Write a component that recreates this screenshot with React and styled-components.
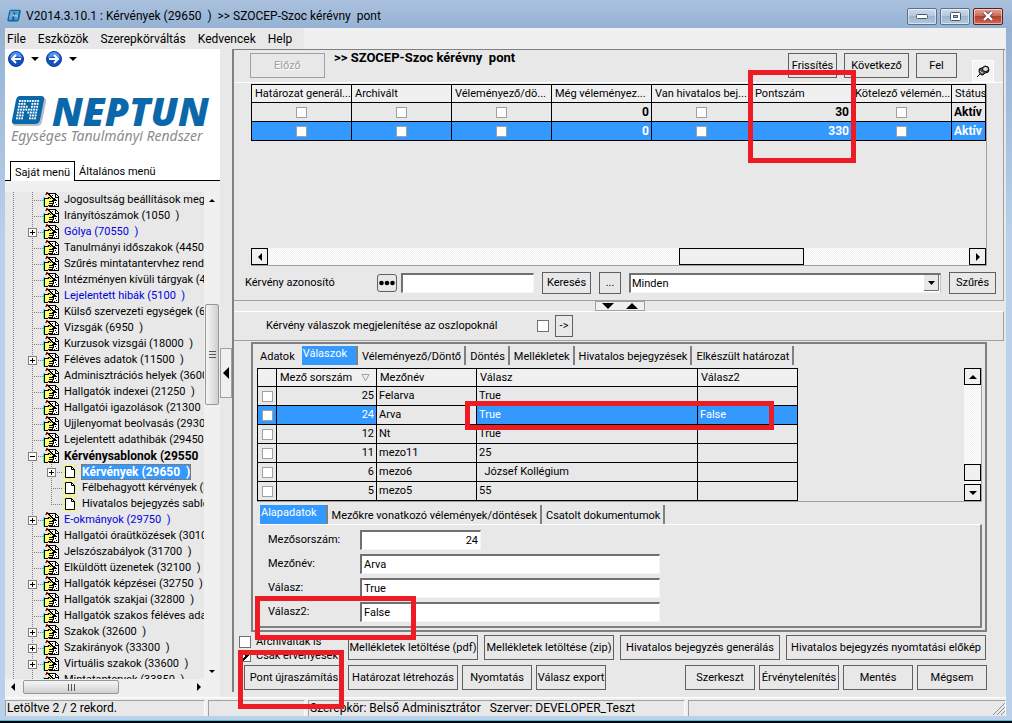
import React from 'react';
import styled, { createGlobalStyle, css } from 'styled-components';

const GlobalStyle = createGlobalStyle`
  * {
    box-sizing: border-box;
  }
  body {
    margin: 0;
    background: #e8e8e8;
    color: #000;
    font-family: Roboto, 'Liberation Sans', sans-serif;
    font-size: 11px;
    line-height: 16px;
  }
  button,
  input,
  select {
    font: inherit;
    color: inherit;
    margin: 0;
  }
  svg {
    flex: none;
  }
`;

const Window = styled.div`
  position: relative;
  display: flex;
  flex-direction: column;
  height: 100vh;
  min-height: 640px;
  padding: 0 6px 5px 5px;
  border-bottom: 2px solid #000;
  background: linear-gradient(#a9c1dd, #95b2d4 28px, #b9d1ea 240px);
  box-shadow: inset 0 -1px 0 #35c5e8;
  overflow: hidden;
`;

const TitleBar = styled.header`
  display: flex;
  align-items: center;
  flex: none;
  gap: 4px;
  height: 28px;
  padding: 4px 3px 0 2px;
  white-space: pre;
`;

const Caption = styled.h1`
  flex: 1;
  margin: 0;
  font-size: 12px;
  font-weight: 400;
`;

const WindowButtons = styled.div`
  display: flex;
  gap: 3px;
`;

const WindowButton = styled.button`
  display: flex;
  align-items: center;
  justify-content: center;
  width: 30px;
  height: 17px;
  padding: 0;
  border: 1px solid ${props => (props.$close ? '#5b1f1a' : '#5c6f86')};
  border-radius: 2px;
  background: ${props =>
    props.$close
      ? 'linear-gradient(#e3a194, #cf6a58 45%, #b8402b 50%, #cf6a52)'
      : 'linear-gradient(#cddcec, #b5c9df 45%, #9db5cf 50%, #b3c8df)'};
  box-shadow: inset 0 0 0 1px rgba(255, 255, 255, 0.5);
`;

const MenuBar = styled.nav`
  display: flex;
  flex: none;
  height: 21px;
  background: #f0f0f0;
  font-size: 12px;
`;

const MenuItems = styled.div`
  display: flex;
  align-items: center;
  gap: 12px;
  padding: 0 12px 0 2px;
  background: #e8e8e8;
`;

const MenuItem = styled.button`
  padding: 0;
  border: 0;
  background: none;
`;

const Body = styled.div`
  display: flex;
  flex: 1;
  min-height: 0;
  background: #e8e8e8;
`;

const Sidebar = styled.aside`
  display: flex;
  flex-direction: column;
  flex: none;
  width: 215px;
  background: #f0f0f0;
`;

const Brand = styled.div`
  display: flex;
  flex-direction: column;
  height: 112px;
  background: #fff;
`;

const NavRow = styled.div`
  display: flex;
  align-items: center;
  gap: 7px;
  height: 20px;
  padding-left: 3px;
`;

const IconButton = styled.button`
  display: flex;
  padding: 0;
  border: 0;
  background: none;
`;

const Logo = styled.div`
  display: flex;
  align-items: center;
  gap: 5px;
  height: 32px;
  margin-top: 26px;
  padding-left: 6px;
  color: #0a68aa;
  font-family: 'Open Sans', sans-serif;
  font-size: 39px;
  font-style: italic;
  font-weight: 800;
  line-height: 32px;
`;

const Slogan = styled.div`
  padding-left: 6px;
  color: #8c8c8c;
  font-family: 'Noto Sans', sans-serif;
  font-size: 14px;
  font-style: italic;
  line-height: 18px;
  white-space: nowrap;
`;

const SideTabs = styled.div`
  display: flex;
  height: 20px;
  padding-left: 5px;
  border-bottom: 1px solid #000;
  background: #fff;
`;

const SideTab = styled.button`
  height: ${props => (props.$active ? 20 : 19)}px;
  padding: 2px 4px 0;
  border: 0 solid #000;
  background: #fff;
  white-space: nowrap;
  ${props =>
    props.$active &&
    css`
      border-width: 1px 1px 0;
    `}
`;

const TreeArea = styled.div`
  display: flex;
  flex: 1;
  min-height: 0;
  margin-top: 11px;
  background: #e8e8e8;
`;

const Tree = styled.ul`
  flex: 1;
  min-width: 0;
  margin: 0;
  padding: 0;
  overflow: hidden;
  list-style: none;
`;

const dottedColumn = css`
  background: repeating-linear-gradient(#808080 0 1px, transparent 1px 2px) 8px
    0 / 1px 100% no-repeat;
`;

const TreeRow = styled.li`
  display: flex;
  align-items: center;
  height: 16px;
  white-space: pre;
`;

const Gutter = styled.span`
  flex: none;
  width: 19px;
  height: 16px;
  ${dottedColumn}
`;

const Branch = styled.span`
  display: flex;
  align-items: center;
  flex: none;
  width: 19px;
  height: 16px;
  padding-left: 4px;
  background: repeating-linear-gradient(
        #808080 0 1px,
        transparent 1px 2px
      )
      8px 0 / 1px ${props => (props.$last ? '8px' : '100%')} no-repeat,
    repeating-linear-gradient(90deg, #808080 0 1px, transparent 1px 2px) 8px 8px /
      11px 1px no-repeat;
`;

const TreeLabel = styled.span`
  margin-left: 3px;
  padding: 0 1px;
  color: ${props => (props.$link ? '#0000e0' : '#000')};
  ${props =>
    props.$bold &&
    css`
      font-size: 12px;
      font-weight: 700;
    `}
  ${props =>
    props.$selected &&
    css`
      outline: 1px dotted #c06000;
      outline-offset: -1px;
      background: #3399ff;
      color: #fff;
    `}
`;

const SideScroll = styled.div`
  display: flex;
  flex-direction: column;
  align-items: center;
  flex: none;
  width: 16px;
  padding: 7px 0 6px;
  background: #f0f0f0;
`;

const SideThumb = styled.div`
  display: flex;
  align-items: center;
  justify-content: center;
  border: 1px solid #979797;
  border-radius: 2px;
  background: ${props =>
    props.$across
      ? 'linear-gradient(#f5f5f5, #e4e4e4 50%, #cfcfcf)'
      : 'linear-gradient(90deg, #f5f5f5, #e4e4e4 50%, #cfcfcf)'};
  width: ${props => (props.$across ? '96px' : '14px')};
  height: ${props => (props.$across ? '14px' : '101px')};
`;

const Spring = styled.div`
  flex: ${props => props.$grow || 1};
`;

const SideScrollX = styled.div`
  display: flex;
  align-items: center;
  flex: none;
  height: 18px;
  padding: 0 19px 2px 6px;
  gap: 8px;
`;

const Divider = styled.div`
  display: flex;
  align-items: center;
  flex: none;
  width: 12px;
`;

const DividerGrip = styled.button`
  display: flex;
  align-items: center;
  justify-content: center;
  width: 12px;
  height: 50px;
  padding: 0;
  border: 1px solid #a0a0a0;
  background: #f0f0f0;
`;

const Main = styled.main`
  display: flex;
  flex-direction: column;
  flex: 1;
  min-width: 0;
  margin: 0 1px 5px 0;
  border: solid #808080;
  border-width: 1px 0 0 2px;
`;

const ListPane = styled.section`
  display: flex;
  flex-direction: column;
  flex: 1;
  min-height: 0;
  margin-right: 1px;
  border: solid #a0a0a0;
  border-width: 0 1px 1px 0;
`;

const Toolbar = styled.div`
  display: flex;
  flex: none;
  gap: 7px;
  height: 33px;
  padding: 3px 9px 0 16px;
  border-bottom: 1px solid #fff;
`;

const PathTitle = styled.h2`
  flex: 1;
  margin: 0;
  padding-left: 2px;
  font-size: 13px;
  font-weight: 700;
  line-height: 9px;
  white-space: pre;
`;

const Button = styled.button`
  flex: none;
  width: ${props => props.$width}px;
  height: ${props => (props.$small ? 22 : 25)}px;
  padding: 0;
  border: 1px solid #606060;
  background: #e8e8e8;
  white-space: nowrap;
  &:disabled {
    border-color: #a0a0a0;
    color: #a0a0a0;
    text-shadow: 1px 1px 0 #fff;
  }
`;

const PinButton = styled.button`
  display: flex;
  align-items: center;
  justify-content: center;
  align-self: flex-end;
  width: 22px;
  height: 22px;
  margin-left: 8px;
  padding: 0;
  border: 1px solid #fff;
  background: #f4f4f4;
`;

const ListFrame = styled.div`
  display: flex;
  flex-direction: column;
  flex: 1;
  min-height: 0;
  margin: 1px 16px 0 17px;
  border: solid #a0a0a0;
  border-width: 0 1px 1px 0;
  overflow: hidden;
`;

const DataTable = styled.table`
  width: 100%;
  border-collapse: collapse;
  table-layout: fixed;
  tr {
    height: 19px;
  }
  thead tr {
    height: 18px;
  }
  th,
  td {
    padding: 0 2px;
    border: 1px solid #000;
    line-height: 16px;
    overflow: hidden;
    text-align: left;
    white-space: pre;
  }
  th {
    padding: 0 3px;
    background: #f0f0f0;
    font-weight: 400;
  }
`;

const Cell = styled.td`
  && {
    text-align: ${props => props.$align || 'left'};
    font-size: ${props => (props.$bold ? 12 : 11)}px;
    font-weight: ${props => (props.$bold ? 700 : 400)};
  }
  ${props =>
    props.$selected &&
    css`
      background: #3399ff;
      color: #fff;
    `}
`;

const Check = styled.input.attrs({ type: 'checkbox' })`
  appearance: none;
  display: inline-block;
  flex: none;
  width: ${props => (props.$sunken ? 12 : 11)}px;
  height: ${props => (props.$sunken ? 12 : 11)}px;
  border: 1px solid ${props => (props.$sunken ? '#707070' : '#a0a0a0')};
  background: #fff;
  vertical-align: middle;
  &:checked {
    background: linear-gradient(135deg, transparent 50%, #000 50% 68%, transparent 68%);
    background-color: #fff;
  }
`;

const hatch = css`
  background: repeating-conic-gradient(#ffffff 0 25%, #f0f0f0 0 50%) 0 0 / 2px
    2px;
`;

const ScrollX = styled.div`
  display: flex;
  flex: none;
  height: 17px;
  margin-top: auto;
  ${hatch}
`;

const ScrollY = styled.div`
  display: flex;
  flex-direction: column;
  flex: none;
  width: 17px;
  margin-left: auto;
  ${hatch}
`;

const ScrollButton = styled.button`
  display: flex;
  align-items: center;
  justify-content: center;
  flex: none;
  width: 17px;
  height: 17px;
  padding: 0;
  border: 1px solid #000;
  background: #f0f0f0;
`;

const ScrollThumb = styled.div`
  width: ${props => props.$width}px;
  height: 17px;
  border: 1px solid #000;
  background: #f0f0f0;
`;

const FilterRow = styled.div`
  display: flex;
  align-items: center;
  flex: none;
  gap: 8px;
  height: 34px;
  padding: 0 7px 0 11px;
`;

const FilterLabel = styled.label`
  width: 124px;
`;

const DotsButton = styled.button`
  display: flex;
  align-items: center;
  justify-content: center;
  width: 20px;
  height: 18px;
  margin-right: -4px;
  padding: 0;
  border: 1px solid #606060;
  border-radius: 3px;
  background: #e8e8e8;
`;

const TextInput = styled.input`
  width: ${props => props.$width}px;
  height: 20px;
  padding: 0 2px;
  border: solid;
  border-width: 2px 1px 1px 2px;
  border-color: #707070 #f4f4f4 #f4f4f4 #707070;
  border-radius: 0;
  background: #fff;
  text-align: ${props => props.$align || 'left'};
`;

const SelectBox = styled.div`
  position: relative;
  display: flex;
  flex: 1;
  svg {
    position: absolute;
    top: 2px;
    right: 2px;
    pointer-events: none;
  }
`;

const Select = styled.select`
  appearance: none;
  width: 100%;
  height: 20px;
  padding: 0 20px 0 1px;
  border: solid;
  border-width: 2px 1px 1px 2px;
  border-color: #707070 #c0c0c0 #f4f4f4 #707070;
  border-radius: 0;
  background: #fff;
`;

const SplitBar = styled.div`
  display: flex;
  justify-content: center;
  flex: none;
  height: 10px;
`;

const SplitGrip = styled.button`
  display: flex;
  align-items: center;
  justify-content: space-around;
  width: 50px;
  height: 10px;
  padding: 0;
  border: 1px solid #a0a0a0;
  background: #f0f0f0;
`;

const OptionRow = styled.div`
  display: flex;
  align-items: center;
  flex: none;
  gap: 6px;
  height: 30px;
  margin-right: 1px;
  padding-left: 32px;
  border: solid;
  border-width: 1px 1px 1px 0;
  border-color: #fff #a0a0a0 #a0a0a0;
`;

const OptionLabel = styled.label`
  width: 265px;
`;

const DetailFrame = styled.section`
  flex: none;
  margin: 1px 18px 0 17px;
  padding: 2px 3px 2px 4px;
  border: 2px solid #808080;
`;

const Tabs = styled.div`
  display: flex;
  height: 22px;
  padding-left: ${props => (props.$inner ? 3 : 0)}px;
  padding-top: ${props => (props.$inner ? 3 : 0)}px;
`;

const Tab = styled.button`
  height: 19px;
  padding: ${props => (props.$active ? '0 9px 3px 1px' : '3px 3px 0 4px')};
  border: 0;
  border-right: 2px solid #808080;
  background: none;
  line-height: 16px;
  white-space: nowrap;
  ${props =>
    props.$plain &&
    css`
      border-color: transparent;
      padding-left: 3px;
      padding-right: 5px;
    `}
  ${props =>
    props.$active &&
    css`
      background: #3399ff;
      color: #fff;
    `}
`;

const AnswerFrame = styled.div`
  display: flex;
  border: solid #a0a0a0;
  border-width: 0 1px 1px 0;
  ${DataTable} {
    width: 541px;
  }
`;

const SortHeader = styled.span`
  display: flex;
  align-items: center;
  justify-content: space-between;
  padding-right: 3px;
`;

const Form = styled.form`
  display: grid;
  grid-template-columns: 92px 1fr;
  align-items: center;
  row-gap: 4px;
  padding: 5px 0 4px 11px;
  border: solid;
  border-width: 1px 2px 2px 0;
  border-color: #fff #808080 #808080;
`;

const Actions = styled.div`
  display: flex;
  flex: none;
  gap: ${props => props.$gap}px;
  height: 30px;
  padding: ${props => (props.$inset ? '3px 18px 0 10px' : '3px 18px 0 5px')};
`;

const CheckColumn = styled.div`
  flex: none;
  width: 103px;
  height: 28px;
  overflow: hidden;
`;

const CheckLabel = styled.label`
  display: flex;
  align-items: center;
  gap: 5px;
  height: 14px;
  white-space: nowrap;
`;

const StatusBar = styled.footer`
  display: flex;
  flex: none;
  gap: 3px;
  height: 19px;
  padding-top: 2px;
  border-top: 1px solid #fff;
  background: #f0f0f0;
  font-size: 12px;
`;

const StatusCell = styled.div`
  flex: ${props => (props.$width ? 'none' : 1)};
  width: ${props => (props.$width ? `${props.$width}px` : 'auto')};
  padding-left: 1px;
  border: solid;
  border-width: 1px 1px 0;
  border-color: #a0a0a0 #fff #fff #a0a0a0;
  background: #e8e8e8;
  line-height: 15px;
  overflow: hidden;
  text-align: ${props => props.$align || 'left'};
  white-space: pre;
`;

// red callout drawn over the window
const Callout = styled.div`
  position: absolute;
  left: ${props => props.$x}px;
  top: ${props => props.$y}px;
  width: ${props => props.$w}px;
  height: ${props => props.$h}px;
  border: 5px solid #ed1c24;
  pointer-events: none;
`;

const arrows = {
  up: 'M0 4L4 0L8 4Z',
  down: 'M0 0H8L4 4Z',
  left: 'M4 0V8L0 4Z',
  right: 'M0 0L4 4L0 8Z',
};

function Arrow({ dir, size = 8, color = '#000' }) {
  const flat = dir === 'up' || dir === 'down';
  return (
    <svg
      width={flat ? size : size / 2}
      height={flat ? size / 2 : size}
      viewBox={flat ? '0 0 8 4' : '0 0 4 8'}
    >
      <path d={arrows[dir]} fill={color} />
    </svg>
  );
}

function NeptunMark({ size, rounded }) {
  const dots = [];
  for (let y = 0; y < 7; y += 1) {
    for (let x = 0; x < 8; x += 1) {
      if (x < 3 || x > 4 || x - 1 === y || x === y || y < 1) {
        dots.push(
          <rect
            key={`${x}-${y}`}
            x={8 + x * 2.6 - y * 0.5}
            y={5 + y * 2.9}
            width="1.8"
            height="1.9"
            fill="#fff"
          />
        );
      }
    }
  }
  return (
    <svg width={size} height={Math.round(size * 0.9)} viewBox="0 0 36 32">
      {rounded && (
        <path
          d="M10 3h22q4 0 3 4l-4 20q-1 4-5 4H5q-4 0-3-4l4-20q1-4 4-4z"
          fill="#b9bec4"
        />
      )}
      <path
        d="M9 1h21q4 0 3 4l-4 20q-1 4-5 4H4q-4 0-3-4L5 5q1-4 4-4z"
        fill="#0a68aa"
      />
      {dots}
    </svg>
  );
}

function RoundArrow({ back }) {
  return (
    <svg width="16" height="16" viewBox="0 0 16 16">
      <circle cx="8" cy="8" r="7.5" fill="#1350bd" stroke="#0b3d99" />
      <path d="M2 7a6 6 0 0 1 12 0Q8 4 2 7z" fill="#4f94ee" />
      <path
        d={back ? 'M13 8H4M8 4L4 8L8 12' : 'M3 8H12M8 4L12 8L8 12'}
        fill="none"
        stroke="#fff"
        strokeWidth="2"
      />
    </svg>
  );
}

function FormIcon() {
  return (
    <svg width="17" height="16" viewBox="0 0 17 16" shapeRendering="crispEdges">
      <path d="M6.500 1.500h6l3 3v10h-9z" fill="#fff" stroke="#000" />
      <path d="M12.500 1v4h3" fill="none" stroke="#000" />
      <path
        d="M11 6.500h1M13 8.500h1M12 10.500h1M13 12.500h1M11 13.500h1M9 3.500h1"
        stroke="#000"
      />
      <path d="M0 5h2v9H0z" fill="#40e8e8" />
      <path
        d="M1.500 6.500h3l2-1 2 1 4 1v1h-3v1h1v2h-1v2h-3l-3 1h-2z"
        fill="#ffff66"
        stroke="#000"
      />
      <path d="M4 1l6 6" stroke="#000" strokeWidth="2" />
      <path d="M4 2l5 5" stroke="#ffe94d" />
      <path d="M3 .5h2M2 2.500h2" stroke="#e02020" />
      <path d="M6 9.500h3M6 11.500h3" stroke="#000" />
    </svg>
  );
}

function PageIcon() {
  return (
    <svg width="16" height="16" viewBox="0 0 16 16">
      <path
        d="M1 1l3 3M14 1l-2 3M1 14l2-2M15 15l-2-2M0 8h3M15 9h-2M8 0v2M8 16v-2"
        stroke="#f4f000"
      />
      <path d="M2 1h8l4 4v10H2z" fill="none" stroke="#f8f58c" />
      <path d="M3.5 2.5h6l3 3v8h-9z" fill="#fff" stroke="#000" />
      <path d="M9.5 2.5v3h3" fill="none" stroke="#000" />
    </svg>
  );
}

function Expander({ open }) {
  return (
    <svg width="9" height="9" viewBox="0 0 9 9" shapeRendering="crispEdges">
      <rect x="0.5" y="0.5" width="8" height="8" fill="#fff" stroke="#808080" />
      <path d={open ? 'M2 4.5h5' : 'M2 4.5h5M4.5 2v5'} stroke="#000" />
    </svg>
  );
}

function PinIcon() {
  return (
    <svg width="14" height="14" viewBox="0 0 14 14">
      <path d="M1 13l4-4" stroke="#000" />
      <path
        d="M3 6q0-2 3-2l3-2q4 0 4 4 0 3-4 3l-2 2q-4 0-4-5z"
        fill="#555"
        stroke="#000"
      />
      <ellipse cx="9.5" cy="5" rx="3" ry="2.5" fill="#e4e4e4" stroke="#000" />
      <path d="M4 7q1 2 3 2" fill="none" stroke="#ddd" />
    </svg>
  );
}

const treeItems = [
  { text: 'Jogosultság beállítások megtekintése' },
  { text: 'Irányítószámok (1050  )' },
  { text: 'Gólya (70550  )', link: true, box: 'plus' },
  { text: 'Tanulmányi időszakok (4450  )' },
  { text: 'Szűrés mintatantervhez rendelt' },
  { text: 'Intézményen kívüli tárgyak (4500  )' },
  { text: 'Lejelentett hibák (5100  )', link: true },
  { text: 'Külső szervezeti egységek (6800  )' },
  { text: 'Vizsgák (6950  )' },
  { text: 'Kurzusok vizsgái (18000  )' },
  { text: 'Féléves adatok (11500  )', box: 'plus' },
  { text: 'Adminisztrációs helyek (3600  )' },
  { text: 'Hallgatók indexei (21250  )' },
  { text: 'Hallgatói igazolások (21300  )' },
  { text: 'Ujjlenyomat beolvasás (29300  )' },
  { text: 'Lejelentett adathibák (29450  )' },
  { text: 'Kérvénysablonok (29550  )', bold: true, box: 'minus' },
  { text: 'Kérvények (29650  )', child: true, bold: true, selected: true, box: 'plus' },
  { text: 'Félbehagyott kérvények (29660  )', child: true },
  { text: 'Hivatalos bejegyzés sablonok', child: true, last: true },
  { text: 'E-okmányok (29750  )', link: true, box: 'plus' },
  { text: 'Hallgatói óraütközések (30100  )' },
  { text: 'Jelszószabályok (31700  )' },
  { text: 'Elküldött üzenetek (32100  )' },
  { text: 'Hallgatók képzései (32750  )', box: 'plus' },
  { text: 'Hallgatók szakjai (32800  )' },
  { text: 'Hallgatók szakos féléves adatai' },
  { text: 'Szakok (32600  )', box: 'plus' },
  { text: 'Szakirányok (33300  )', box: 'plus' },
  { text: 'Virtuális szakok (33600  )', box: 'plus' },
  { text: 'Mintatantervek (33850  )' },
];

const listColumns = [
  'Határozat generál...',
  'Archivált',
  'Véleményező/dö...',
  'Még véleményez...',
  'Van hivatalos bej...',
  'Pontszám',
  'Kötelező vélemén...',
  'Státus',
];

const listRows = [
  { id: 1, points: '30' },
  { id: 2, points: '330', selected: true },
];

const answers = [
  { no: 25, name: 'Felarva', value: 'True' },
  { no: 24, name: 'Arva', value: 'True', value2: 'False', selected: true },
  { no: 12, name: 'Nt', value: 'True' },
  { no: 11, name: 'mezo11', value: '25' },
  { no: 6, name: 'mezo6', value: '  József Kollégium' },
  { no: 5, name: 'mezo5', value: '55' },
];

function TreeItem({ item }) {
  return (
    <TreeRow>
      <Gutter />
      {item.child && <Gutter />}
      <Branch $last={item.last}>
        {item.box && <Expander open={item.box === 'minus'} />}
      </Branch>
      {item.child ? <PageIcon /> : <FormIcon />}
      <TreeLabel $link={item.link} $bold={item.bold} $selected={item.selected}>
        {item.text}
      </TreeLabel>
    </TreeRow>
  );
}

function ListTable() {
  return (
    <DataTable>
      <colgroup>
        {listColumns.slice(0, 7).map(name => (
          <col key={name} width="100" />
        ))}
        <col />
      </colgroup>
      <thead>
        <tr>
          {listColumns.map(name => (
            <th key={name}>{name}</th>
          ))}
        </tr>
      </thead>
      <tbody>
        {listRows.map(row => (
          <tr key={row.id}>
            {['check', 'check', 'check', '0', 'check', row.points, 'check'].map(
              (value, i) =>
                value === 'check' ? (
                  <Cell key={listColumns[i]} $selected={row.selected} $align="center">
                    <Check aria-label={listColumns[i]} />
                  </Cell>
                ) : (
                  <Cell
                    key={listColumns[i]}
                    $selected={row.selected}
                    $align="right"
                    $bold
                  >
                    {value}
                  </Cell>
                )
            )}
            <Cell $selected={row.selected} $bold>
              Aktív
            </Cell>
          </tr>
        ))}
      </tbody>
    </DataTable>
  );
}

function AnswerTable() {
  return (
    <DataTable>
      <colgroup>
        <col width="19" />
        <col width="100" />
        <col width="100" />
        <col width="221" />
        <col width="100" />
      </colgroup>
      <thead>
        <tr>
          <th aria-label="Kijelölés" />
          <th>
            <SortHeader>
              Mező sorszám
              <svg width="9" height="9" viewBox="0 0 9 9">
                <path d="M1 1.5h7L4.5 8z" fill="none" stroke="#a0a0a0" />
              </svg>
            </SortHeader>
          </th>
          <th>Mezőnév</th>
          <th>Válasz</th>
          <th>Válasz2</th>
        </tr>
      </thead>
      <tbody>
        {answers.map(row => (
          <tr key={row.no}>
            <Cell $selected={row.selected} $align="center">
              <Check aria-label={row.name} />
            </Cell>
            <Cell $selected={row.selected} $align="right">
              {row.no}
            </Cell>
            <Cell>{row.name}</Cell>
            <Cell $selected={row.selected}>{row.value}</Cell>
            <Cell $selected={row.selected}>{row.value2}</Cell>
          </tr>
        ))}
      </tbody>
    </DataTable>
  );
}

function SidePanel() {
  return (
    <Sidebar>
      <Brand>
        <NavRow>
          <IconButton aria-label="Vissza">
            <RoundArrow back />
          </IconButton>
          <Arrow dir="down" />
          <IconButton aria-label="Előre">
            <RoundArrow />
          </IconButton>
          <Arrow dir="down" />
        </NavRow>
        <Logo>
          <NeptunMark size={36} rounded />
          NEPTUN
        </Logo>
        <Slogan>Egységes Tanulmányi Rendszer</Slogan>
      </Brand>
      <SideTabs>
        <SideTab $active>Saját menü</SideTab>
        <SideTab>Általános menü</SideTab>
      </SideTabs>
      <TreeArea>
        <Tree>
          {treeItems.map(item => (
            <TreeItem key={item.text} item={item} />
          ))}
        </Tree>
        <SideScroll>
          <Arrow dir="up" size={6} />
          <Spring $grow={10} />
          <SideThumb>
            <svg width="7" height="7" viewBox="0 0 7 7">
              <path d="M0 .5h7M0 3.5h7M0 6.5h7" stroke="#555" />
            </svg>
          </SideThumb>
          <Spring $grow={26} />
          <Arrow dir="down" size={6} />
        </SideScroll>
      </TreeArea>
      <SideScrollX>
        <Arrow dir="left" />
        <SideThumb $across>
          <svg width="7" height="7" viewBox="0 0 7 7">
            <path d="M.5 0v7M3.5 0v7M6.5 0v7" stroke="#555" />
          </svg>
        </SideThumb>
        <Spring />
        <Arrow dir="right" />
      </SideScrollX>
    </Sidebar>
  );
}

function Filters() {
  return (
    <FilterRow>
      <FilterLabel htmlFor="request-id">Kérvény azonosító</FilterLabel>
      <DotsButton aria-label="Tallózás">
        <svg width="16" height="6" viewBox="0 0 16 6">
          <circle cx="2.5" cy="3" r="2.3" />
          <circle cx="8" cy="3" r="2.3" />
          <circle cx="13.5" cy="3" r="2.3" />
        </svg>
      </DotsButton>
      <TextInput id="request-id" $width={133} />
      <Button $width={49} $small>
        Keresés
      </Button>
      <Button $width={22} $small>
        ...
      </Button>
      <SelectBox>
        <Select aria-label="Szűrő" defaultValue="Minden">
          <option>Minden</option>
        </Select>
        <svg width="15" height="16" viewBox="0 0 15 16">
          <path d="M0 0h15v16H0z" fill="#e8e8e8" />
          <path d="M0 15.5h14.5V0" fill="none" stroke="#707070" />
          <path d="M4 6h7l-3.500 4z" />
        </svg>
      </SelectBox>
      <Button $width={47} $small>
        Szűrés
      </Button>
    </FilterRow>
  );
}

function DetailPanel() {
  return (
    <DetailFrame>
      <Tabs>
        <Tab $plain>Adatok</Tab>
        <Tab $active>Válaszok</Tab>
        <Tab>Véleményező/Döntő</Tab>
        <Tab>Döntés</Tab>
        <Tab>Mellékletek</Tab>
        <Tab>Hivatalos bejegyzések</Tab>
        <Tab>Elkészült határozat</Tab>
      </Tabs>
      <AnswerFrame>
        <AnswerTable />
        <ScrollY>
          <ScrollButton aria-label="Fel">
            <Arrow dir="up" />
          </ScrollButton>
          <Spring />
          <ScrollThumb $width={17} />
          <Spring $grow={0.04} />
          <ScrollButton aria-label="Le">
            <Arrow dir="down" />
          </ScrollButton>
        </ScrollY>
      </AnswerFrame>
      <Tabs $inner>
        <Tab $active>Alapadatok</Tab>
        <Tab>Mezőkre vonatkozó vélemények/döntések</Tab>
        <Tab>Csatolt dokumentumok</Tab>
      </Tabs>
      <Form>
        <label htmlFor="field-no">Mezősorszám:</label>
        <TextInput id="field-no" $width={121} $align="right" defaultValue="24" />
        <label htmlFor="field-name">Mezőnév:</label>
        <TextInput id="field-name" $width={300} defaultValue="Arva" />
        <label htmlFor="answer">Válasz:</label>
        <TextInput id="answer" $width={300} defaultValue="True" />
        <label htmlFor="answer2">Válasz2:</label>
        <TextInput id="answer2" $width={300} defaultValue="False" />
      </Form>
    </DetailFrame>
  );
}

export default function App() {
  return (
    <>
      <GlobalStyle />
      <Window>
        <TitleBar>
          <NeptunMark size={15} />
          <Caption>
            {'V2014.3.10.1 : Kérvények (29650  )  >> SZOCEP-Szoc kérévny  pont'}
          </Caption>
          <WindowButtons>
            <WindowButton aria-label="Kis méret">
              <svg width="12" height="5" viewBox="0 0 12 5">
                <rect x=".5" y=".5" width="11" height="4" rx="1" fill="#fff" stroke="#4a5868" />
              </svg>
            </WindowButton>
            <WindowButton aria-label="Teljes méret">
              <svg width="11" height="9" viewBox="0 0 11 9">
                <rect x=".5" y=".5" width="10" height="8" rx="1" fill="#fff" stroke="#4a5868" />
                <rect x="3.500" y="3.500" width="4" height="2" fill="#9db5cf" stroke="#4a5868" />
              </svg>
            </WindowButton>
            <WindowButton $close aria-label="Bezárás">
              <svg width="12" height="10" viewBox="0 0 12 10">
                <path d="M2 1l8 8M10 1L2 9" stroke="#5a4a55" strokeWidth="4" />
                <path d="M2 1l8 8M10 1L2 9" stroke="#fff" strokeWidth="2.400" />
              </svg>
            </WindowButton>
          </WindowButtons>
        </TitleBar>
        <MenuBar>
          <MenuItems>
            <MenuItem>File</MenuItem>
            <MenuItem>Eszközök</MenuItem>
            <MenuItem>Szerepkörváltás</MenuItem>
            <MenuItem>Kedvencek</MenuItem>
            <MenuItem>Help</MenuItem>
          </MenuItems>
        </MenuBar>
        <Body>
          <SidePanel />
          <Divider>
            <DividerGrip aria-label="Oldalsáv elrejtése">
              <Arrow dir="left" size={12} />
            </DividerGrip>
          </Divider>
          <Main>
            <ListPane>
              <Toolbar>
                <Button $width={75} disabled>
                  Előző
                </Button>
                <PathTitle>{'>> SZOCEP-Szoc kérévny  pont'}</PathTitle>
                <Button $width={49}>Frissítés</Button>
                <Button $width={65}>Következő</Button>
                <Button $width={41}>Fel</Button>
                <PinButton aria-label="Rögzítés">
                  <PinIcon />
                </PinButton>
              </Toolbar>
              <ListFrame>
                <ListTable />
                <ScrollX>
                  <ScrollButton aria-label="Balra">
                    <Arrow dir="left" />
                  </ScrollButton>
                  <Spring $grow={5} />
                  <ScrollThumb $width={125} />
                  <Spring $grow={2} />
                  <ScrollButton aria-label="Jobbra">
                    <Arrow dir="right" />
                  </ScrollButton>
                </ScrollX>
              </ListFrame>
              <Filters />
            </ListPane>
            <SplitBar>
              <SplitGrip aria-label="Panelek átméretezése">
                <Arrow dir="down" size={12} />
                <Arrow dir="up" size={12} />
              </SplitGrip>
            </SplitBar>
            <OptionRow>
              <OptionLabel htmlFor="show-answers">
                Kérvény válaszok megjelenítése az oszlopoknál
              </OptionLabel>
              <Check id="show-answers" $sunken />
              <Button $width={18} $small>
                {'->'}
              </Button>
            </OptionRow>
            <DetailPanel />
            <Actions $gap={6}>
              <CheckColumn>
                <CheckLabel>
                  <Check $sunken />
                  Archiváltak is
                </CheckLabel>
                <CheckLabel>
                  <Check $sunken defaultChecked />
                  Csak érvényesek
                </CheckLabel>
              </CheckColumn>
              <Button $width={130}>Mellékletek letöltése (pdf)</Button>
              <Button $width={130}>Mellékletek letöltése (zip)</Button>
              <Button $width={160}>Hivatalos bejegyzés generálás</Button>
              <Button $width={200}>Hivatalos bejegyzés nyomtatási előkép</Button>
            </Actions>
            <Actions $gap={4} $inset>
              <Button $width={100}>Pont újraszámítás</Button>
              <Button $width={110}>Határozat létrehozás</Button>
              <Button $width={70}>Nyomtatás</Button>
              <Button $width={70}>Válasz export</Button>
              <Spring />
              <Button $width={70}>Szerkeszt</Button>
              <Button $width={80}>Érvénytelenítés</Button>
              <Button $width={70}>Mentés</Button>
              <Button $width={70}>Mégsem</Button>
            </Actions>
          </Main>
        </Body>
        <StatusBar>
          <StatusCell $width={200}>Letöltve 2 / 2 rekord.</StatusCell>
          <StatusCell $width={97} />
          <StatusCell $width={377}>
            {'Szerepkör: Belső Adminisztrátor   Szerver: DEVELOPER_Teszt'}
          </StatusCell>
          <StatusCell $align="right">
            <svg width="12" height="14" viewBox="0 0 12 14">
              <path d="M0 14L12 2M4 14l8-8M8 14l4-4" stroke="#909090" />
            </svg>
          </StatusCell>
        </StatusBar>
        <Callout $x={748} $y={70} $w={108} $h={93} />
        <Callout $x={465} $y={401} $w={309} $h={29} />
        <Callout $x={255} $y={596} $w={161} $h={44} />
        <Callout $x={238} $y={650} $w={106} $h={59} />
      </Window>
    </>
  );
}
